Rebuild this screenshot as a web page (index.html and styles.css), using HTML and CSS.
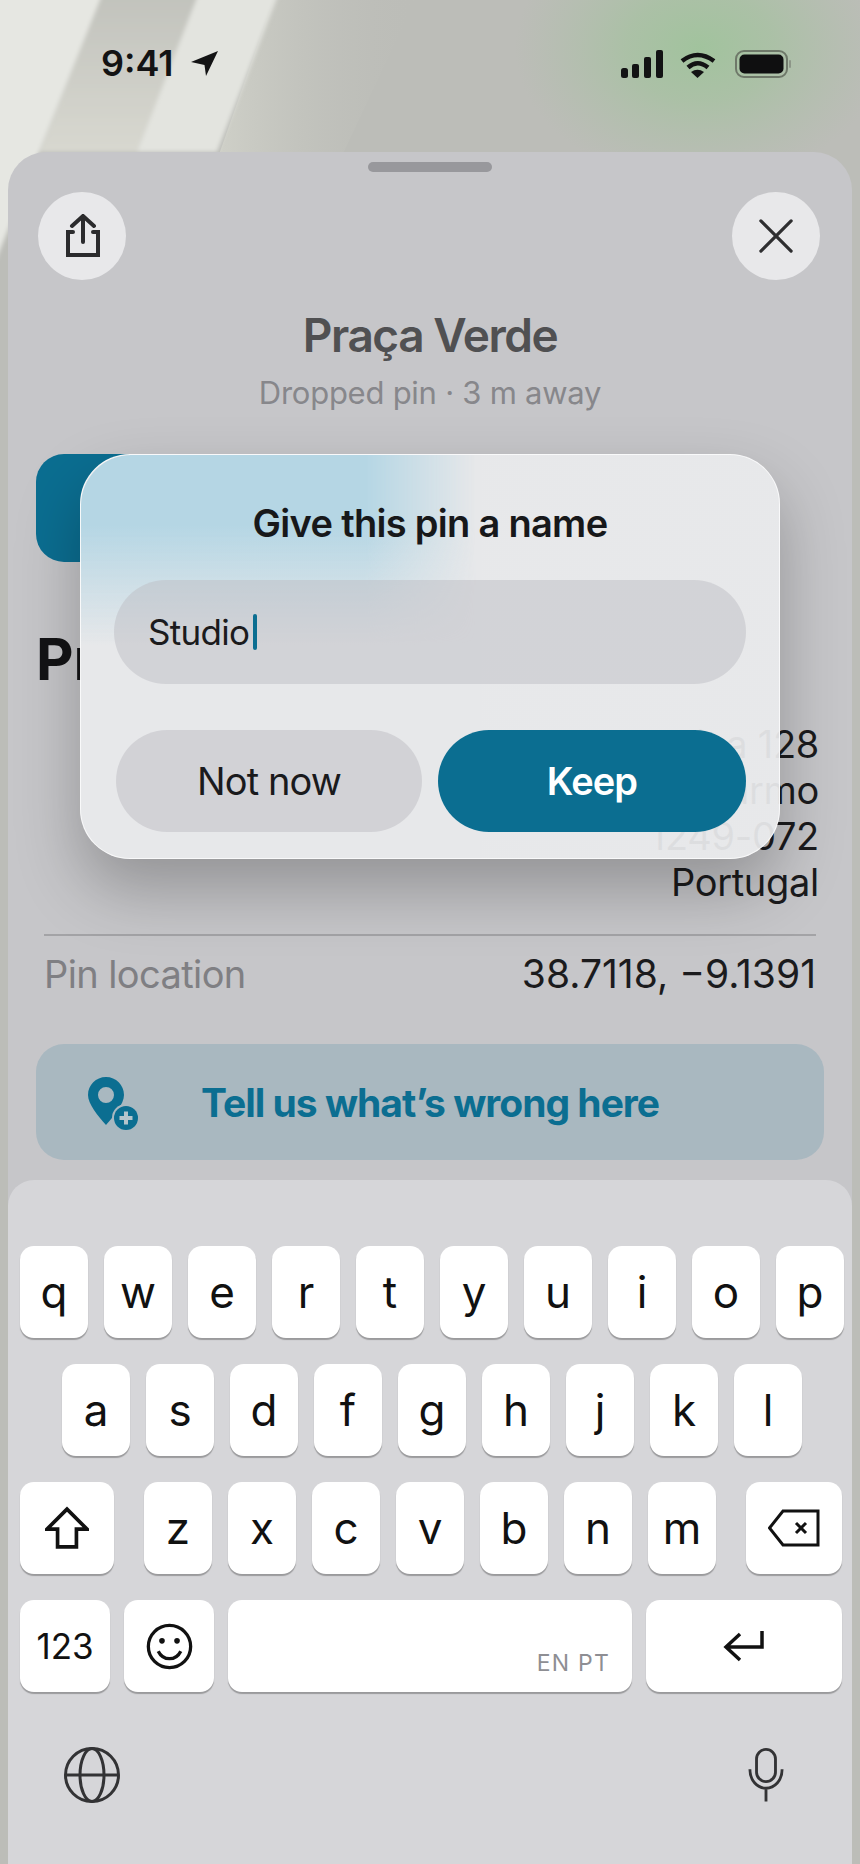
FILE: index.html
```html
<!DOCTYPE html>
<html lang="en">
<head>
<meta charset="utf-8">
<title>Praça Verde</title>
<link rel="stylesheet" href="styles.css">
</head>
<body>
<div class="screen">
  <svg class="wallpaper" viewBox="0 0 860 1864" aria-hidden="true">
    <defs>
      <linearGradient id="band" x1="0" y1="0" x2="0" y2="1">
        <stop offset="0" stop-color="#c1c2bc"/>
        <stop offset="1" stop-color="#d8d8d0"/>
      </linearGradient>
      <linearGradient id="fade" x1="0" y1="0" x2="1" y2="0">
        <stop offset="0" stop-color="#cfd0c8"/>
        <stop offset="1" stop-color="#bcbdb8" stop-opacity="0"/>
      </linearGradient>
      <radialGradient id="glow">
        <stop offset="0" stop-color="#a1c39d"/>
        <stop offset=".4" stop-color="#a8c1a3" stop-opacity=".85"/>
        <stop offset="1" stop-color="#adbfa8" stop-opacity="0"/>
      </radialGradient>
      <filter id="soft"><feGaussianBlur stdDeviation="2"/></filter>
    </defs>
    <rect width="860" height="1864" fill="#bcbdb8"/>
    <polygon points="277,-10 420,-10 340,160 217,160" fill="url(#fade)"/>
    <ellipse cx="700" cy="48" rx="185" ry="135" fill="url(#glow)"/>
    <g filter="url(#soft)">
      <polygon points="-20,-10 104,-10 -20,300" fill="#e6e7e2"/>
      <polygon points="104,-10 200,-10 137,152 40,152" fill="url(#band)"/>
      <polygon points="200,-10 280,-10 217,152 137,152" fill="#e3e4df"/>
    </g>
  </svg>

  <header class="status">
    <div class="status-left">
      <span class="clock">9:41</span>
      <svg class="i-loc" viewBox="0 0 28 26"><path d="M27 0 0 11l13.500 3L15 25z"/></svg>
    </div>
    <div class="status-right">
      <svg class="i-signal" viewBox="0 0 42 28"><rect x="0" y="18" width="7" height="10" rx="2.500"/><rect x="11" y="14" width="7" height="14" rx="2"/><rect x="23" y="7" width="7" height="21" rx="2"/><rect x="35" y="0" width="7" height="28" rx="2"/></svg>
      <svg class="i-wifi" viewBox="0 0 36 26"><path class="wifi-arc" d="M2 9Q17.500-3 34 9"/><path class="wifi-arc" d="M8 15.500Q17.500 7 28 15.500"/><path d="M11 20Q17.500 15.500 24 20L17.500 26z"/></svg>
      <svg class="i-batt" viewBox="0 0 57 28"><rect class="batt-ring" x="1" y="1" width="51" height="26" rx="8"/><rect x="4.500" y="4.500" width="44" height="19" rx="5"/><rect class="batt-cap" x="54" y="10" width="2" height="8" rx="1"/></svg>
    </div>
  </header>

  <main class="sheet">
    <div class="handle"></div>
    <div class="top-row">
      <div class="round-btn">
        <svg class="i-share" viewBox="0 0 36 44"><path d="M18 2v26M7 12 18 2l11 10M8 18H3v23h30V18h-5"/></svg>
      </div>
      <div class="round-btn">
        <svg class="i-close" viewBox="0 0 36 36"><path d="M2 2l32 32M34 2 2 34"/></svg>
      </div>
    </div>
    <h1 class="title">Praça Verde</h1>
    <p class="subtitle">Dropped pin · 3 m away</p>
    <div class="primary-action"></div>
    <h2 class="section">Pr</h2>
    <p class="address">Rua da Bica 128<br>Largo do Carmo<br>1249-072<br>Portugal</p>
    <div class="divider"></div>
    <div class="info-row"><span class="info-label">Pin location</span><span class="info-value">38.7118, −9.1391</span></div>
    <div class="report">
      <svg class="i-pin" viewBox="0 0 56 60">
        <path class="pin-body" fill-rule="evenodd" d="M21 4c10 0 18 8 18 18 0 9-10 21-18 30C13 43 3 31 3 22 3 12 11 4 21 4zm0 10a8 8 0 1 0 0 16 8 8 0 0 0 0-16z"/>
        <circle class="pin-ring" cx="41" cy="45" r="14"/>
        <circle class="pin-body" cx="41" cy="45" r="12"/>
        <path class="pin-plus" d="M41 38.500v13M34.500 45h13"/>
      </svg>
      <span>Tell us what’s wrong here</span>
    </div>
  </main>

  <section class="dialog">
    <div class="dialog-title">Give this pin a name</div>
    <div class="field"><span>Studio</span><i class="caret"></i></div>
    <div class="dialog-actions">
      <div class="btn btn-quiet">Not now</div>
      <div class="btn btn-keep">Keep</div>
    </div>
  </section>

  <section class="keyboard">
    <div class="kb-rows">
      <div class="kb-row">
        <div class="key">q</div><div class="key">w</div><div class="key">e</div><div class="key">r</div><div class="key">t</div><div class="key">y</div><div class="key">u</div><div class="key">i</div><div class="key">o</div><div class="key">p</div>
      </div>
      <div class="kb-row">
        <div class="key">a</div><div class="key">s</div><div class="key">d</div><div class="key">f</div><div class="key">g</div><div class="key">h</div><div class="key">j</div><div class="key">k</div><div class="key">l</div>
      </div>
      <div class="kb-row kb-row-split">
        <div class="key key-shift">
          <svg class="i-key" width="44" height="44" viewBox="0 0 42 42"><path d="M21 3 2 22h10v17h18V22h10z"/></svg>
        </div>
        <div class="kb-letters">
          <div class="key">z</div><div class="key">x</div><div class="key">c</div><div class="key">v</div><div class="key">b</div><div class="key">n</div><div class="key">m</div>
        </div>
        <div class="key key-back">
          <svg class="i-back" width="52" height="38" viewBox="0 0 52 38"><path d="M1.500 19 15 2h35v34H15zM28 14l10 10M38 14 28 24"/></svg>
        </div>
      </div>
      <div class="kb-row kb-row-bottom">
        <div class="key key-num">123</div>
        <div class="key key-num">
          <svg class="i-key" width="47" height="47" viewBox="0 0 50 50"><circle cx="25" cy="25" r="22.500"/><circle class="dot" cx="17" cy="19" r="3"/><circle class="dot" cx="33" cy="19" r="3"/><path d="M13 30c3 6 8 8 12 8s9-2 12-8"/></svg>
        </div>
        <div class="key key-space"><span>EN PT</span></div>
        <div class="key key-return">
          <svg class="i-key" width="42" height="34" viewBox="0 0 42 34"><path d="M39 2v16H4M17 5 3 18l14 13"/></svg>
        </div>
      </div>
    </div>
    <div class="kb-foot">
      <svg class="i-foot" width="58" height="58" viewBox="0 0 58 58"><circle cx="29" cy="29" r="26.500"/><ellipse cx="29" cy="29" rx="12" ry="26.500"/><path d="M2.500 29h53"/></svg>
      <svg class="i-foot" width="36" height="58" viewBox="0 0 38 58"><rect x="9" y="2" width="20" height="34" rx="10"/><path d="M2 23c0 12 8 20 17 20s17-8 17-20M19 43v14"/></svg>
    </div>
  </section>
</div>
</body>
</html>
```

FILE: styles.css
```css
* { box-sizing: border-box; }

html, body { margin: 0; padding: 0; }

body {
  width: 860px;
  height: 1864px;
  overflow: hidden;
  font-family: Inter, "Liberation Sans", sans-serif;
  color: #161618;
}

.screen {
  position: relative;
  width: 860px;
  height: 1864px;
  overflow: hidden;
}

.wallpaper {
  position: absolute;
  inset: 0;
  width: 860px;
  height: 1864px;
}

/* status bar */
.status {
  position: relative;
  height: 152px;
  padding: 45px 68px 0 101px;
  display: flex;
  justify-content: space-between;
  align-items: flex-start;
}

.status-left { display: flex; align-items: center; gap: 17px; }
.clock { font-size: 36px; line-height: 37px; font-weight: 600; color: #131314; }
.i-loc { width: 28px; height: 26px; fill: #131314; }

.status-right { display: flex; align-items: flex-start; gap: 17px; margin-top: 5px; }
.i-signal { width: 42px; height: 28px; fill: #131314; }
.i-wifi { width: 36px; height: 26px; fill: #131314; margin-top: 2px; }
.wifi-arc { fill: none; stroke: #131314; stroke-width: 4.500; }
.i-batt { width: 57px; height: 28px; fill: #0f0f10; margin-left: 2px; }
.batt-ring { fill: none; stroke: #6e7869; stroke-width: 2; }
.batt-cap { fill: #8d9688; }

/* sheet */
.sheet {
  position: relative;
  height: 1712px;
  margin: 0 8px;
  padding: 10px 28px 0;
  background: #c6c6c9;
  border-radius: 38px 38px 0 0;
}

.handle {
  width: 124px;
  height: 10px;
  margin: 0 auto;
  background: #98989c;
  border-radius: 5px;
}

.top-row {
  display: flex;
  justify-content: space-between;
  margin: 20px 4px 0 2px;
}

.round-btn {
  width: 88px;
  height: 88px;
  border-radius: 50%;
  background: #e8e8ea;
  display: flex;
  align-items: center;
  justify-content: center;
}

.i-share { width: 36px; height: 44px; margin-left: 2px; fill: none; stroke: #2b2b2d; stroke-width: 4; stroke-linecap: round; stroke-linejoin: miter; }
.i-close { width: 34px; height: 34px; fill: none; stroke: #2e2e30; stroke-width: 3.400; stroke-linecap: round; }

.title {
  margin: 29px 0 0;
  font-size: 46px;
  line-height: 52px;
  font-weight: 600;
  letter-spacing: -1.450px;
  text-align: center;
  color: #505052;
}

.subtitle {
  margin: 14px 0 0;
  font-size: 31px;
  line-height: 36px;
  letter-spacing: -0.25px;
  text-align: center;
  color: #87878b;
}

.primary-action {
  width: 380px;
  height: 108px;
  margin-top: 43px;
  background: #0b6e91;
  border-radius: 28px;
}

.section {
  margin: 62px 0 0;
  font-size: 58px;
  line-height: 70px;
  font-weight: 700;
  color: #131315;
}

.address {
  margin: 27px 5px 0 0;
  font-size: 38px;
  line-height: 46px;
  letter-spacing: -0.3px;
  text-align: right;
  color: #1b1b1d;
}

.divider {
  height: 2px;
  margin: 29px 8px 0;
  background: #a3a3a6;
}

.info-row {
  display: flex;
  justify-content: space-between;
  align-items: baseline;
  margin: 15px 8px 0 8px;
  font-size: 38px;
  line-height: 46px;
}

.info-label { color: #7f7f83; letter-spacing: -0.6px; }
.info-value { color: #1b1b1d; font-size: 39px; }

.report {
  position: relative;
  height: 116px;
  margin-top: 47px;
  display: flex;
  align-items: center;
  justify-content: center;
  background: #a9b8c0;
  border-radius: 28px;
  font-size: 39px;
  font-weight: 700;
  letter-spacing: -1px;
  color: #0b6e91;
}

.i-pin { position: absolute; left: 49px; top: 29px; width: 56px; height: 60px; }
.pin-body { fill: #0b6e91; }
.pin-ring { fill: #a9b8c0; }
.pin-plus { fill: none; stroke: #b4c5cc; stroke-width: 4; }

/* dialog: solid over the left, faintly see-through at the right */
.dialog {
  position: absolute;
  z-index: 0;
  left: 80px;
  top: 454px;
  width: 700px;
  height: 405px;
  padding: 45px 33px 0;
  border: 1px solid rgba(255, 255, 255, .75);
  border-radius: 50px;
  background: linear-gradient(90deg, #e7e8ea 400px, rgba(233, 234, 236, .94) 400px);
  box-shadow: 0 30px 64px rgba(0, 0, 0, .26);
}

.dialog::before {
  content: "";
  position: absolute;
  z-index: -1;
  inset: 0;
  border-radius: inherit;
  background: linear-gradient(180deg, #b5d6e4 0, #b5d6e4 70px, rgba(181, 214, 228, 0) 190px);
  -webkit-mask-image: linear-gradient(90deg, #000 285px, transparent 395px);
  mask-image: linear-gradient(90deg, #000 285px, transparent 395px);
}

.dialog-title {
  font-size: 38px;
  line-height: 46px;
  font-weight: 600;
  letter-spacing: -0.7px;
  text-align: center;
  color: #17181a;
}

.field {
  height: 104px;
  margin-top: 34px;
  padding: 0 34px;
  display: flex;
  align-items: center;
  gap: 4px;
  border-radius: 52px;
  background: rgba(188, 188, 194, .48);
  font-size: 35px;
  letter-spacing: -0.7px;
  color: #1b1b1d;
}

.caret {
  width: 4px;
  height: 36px;
  border-radius: 2px;
  background: #0b6e91;
}

.dialog-actions {
  display: flex;
  gap: 16px;
  margin: 46px 0 0 2px;
}

.btn {
  height: 102px;
  display: flex;
  align-items: center;
  justify-content: center;
  border-radius: 51px;
  font-size: 38px;
  letter-spacing: -0.9px;
}

.btn-quiet { flex: 0 0 306px; background: #d2d2d6; color: #1a1a1c; }
.btn-keep { flex: 1; background: #0b6e91; color: #fff; font-weight: 600; }

/* keyboard */
.keyboard {
  position: absolute;
  left: 8px;
  right: 8px;
  top: 1180px;
  bottom: 0;
  padding: 66px 8px 0 12px;
  background: #d6d6d9;
  border-radius: 26px 26px 0 0;
}

.kb-rows { display: flex; flex-direction: column; gap: 26px; }
.kb-row { display: flex; justify-content: center; gap: 16px; }
.kb-row-split { justify-content: space-between; padding-right: 2px; }
.kb-row-bottom { gap: 14px; padding-right: 2px; }
.kb-letters { display: flex; gap: 16px; }

.key {
  width: 68px;
  height: 92px;
  display: flex;
  align-items: center;
  justify-content: center;
  background: #fff;
  border-radius: 14px;
  box-shadow: 0 2px 1px rgba(0, 0, 0, .28);
  font-size: 44px;
  color: #111;
}

.key-shift { width: 94px; }
.key-back { width: 96px; }
.key-num { width: 90px; font-size: 35px; letter-spacing: 0; }

.key-space {
  flex: 1;
  align-items: flex-end;
  justify-content: flex-end;
  padding: 0 22px 16px 0;
  font-size: 23px;
  line-height: 26px;
  letter-spacing: 1.200px;
  color: #8e8e93;
}

.key-return { width: 196px; }

.i-key { fill: none; stroke: #111; stroke-width: 3.500; }
.i-key .dot { fill: #111; stroke: none; }
.i-back { fill: none; stroke: #111; stroke-width: 3; }

.kb-foot {
  display: flex;
  justify-content: space-between;
  margin-top: 54px;
  padding: 0 60px 0 43px;
}

.i-foot { fill: none; stroke: #333335; stroke-width: 3; }
```
